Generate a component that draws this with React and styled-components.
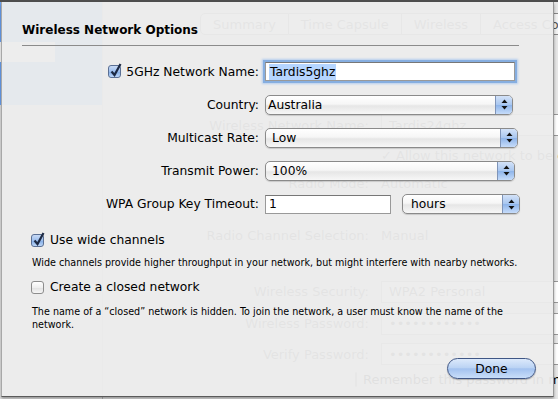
import styled, { createGlobalStyle } from 'styled-components'

const GlobalStyle = createGlobalStyle`
  html, body { margin: 0; padding: 0; background: #e8e8e8; }
  body { font-family: "DejaVu Sans", "Liberation Sans", sans-serif; }
`

const Frame = styled.div`
  position: relative;
  width: 558px;
  height: 399px;
  overflow: hidden;
  background: #e8e8e8;
  font-family: "DejaVu Sans", "Liberation Sans", sans-serif;
  color: #000;
`

/* ---------- the window behind the sheet ---------- */

const Backdrop = styled.div`
  display: flex;
  flex-direction: column;
  height: 100%;
`

const Toolbar = styled.div`
  height: 2px;
  background: #4f4f4f;
`

const Body = styled.div`
  flex: 1;
  display: flex;
  min-height: 0;
`

const Sidebar = styled.div`
  width: 102px;
  flex-shrink: 0;
  display: flex;
  flex-direction: column;
  border-right: 1px solid #bbb;
`

const SidebarSelection = styled.div`
  height: 103px;
  background: #6da6f8;
  display: flex;
  flex-direction: column;
  padding-top: 40px;
  box-sizing: border-box;
`

const SidebarField = styled.div`
  width: 55px;
  height: 20px;
  background: #fff;
`

const Pane = styled.div`
  flex: 1;
  min-width: 0;
  display: flex;
  flex-direction: column;
  padding-top: 11px;
  white-space: nowrap;
`

const Tabs = styled.div`
  display: flex;
  margin-left: 97px;
  height: 22px;
`

const Tab = styled.div`
  padding: 0 12px;
  display: flex;
  align-items: center;
  font-size: 13px;
  color: #555;
  border: 1px solid #888;
  border-left-width: ${p => (p.first ? 1 : 0)}px;
  background: #f4f4f4;
  border-radius: ${p => (p.first ? '5px 0 0 5px' : '0')};
`

const GhostForm = styled.div`
  display: grid;
  grid-template-columns: 266px 1fr;
  column-gap: 12px;
  margin-top: 75px;
  font-size: 13px;
  color: #444;
`

const GhostLabel = styled.div`
  height: ${p => p.h}px;
  display: flex;
  align-items: center;
  justify-content: flex-end;
`

const GhostValue = styled.div`
  height: ${p => p.h}px;
  display: flex;
  align-items: center;
`

const GhostField = styled.div`
  width: 200px;
  height: 20px;
  border: 1px solid #999;
  background: #fff;
  display: flex;
  align-items: center;
  padding-left: 7px;
`

const GhostRemember = styled.div`
  grid-column: 1 / 3;
  height: 22px;
  display: flex;
  align-items: center;
  gap: 6px;
  padding-left: 252px;
  color: #000;
`

const GhostBox = styled.span`
  width: 13px;
  height: 13px;
  border: 1px solid #888;
  border-radius: 3px;
  background: #fff;
`

/* ---------- the sheet ---------- */

const Sheet = styled.div`
  position: absolute;
  left: 1px;
  top: 2px;
  width: 553px;
  height: 395px;
  box-sizing: border-box;
  background: rgba(236, 236, 236, 0.95);
  border-left: 1px solid #a8a8a8;
  border-right: 1px solid #9a9a9a;
  border-bottom: 1px solid #5a5a5a;
  box-shadow: 0 2px 3px rgba(0, 0, 0, 0.35);
  display: flex;
  flex-direction: column;
  padding: 0 18px 0 20px;
  white-space: normal;
`

const Title = styled.div`
  font-weight: bold;
  font-size: 12px;
  padding-top: 21px;
  height: 22px;
`

const Rule = styled.div`
  height: 1px;
  background: #8b8b8b;
  margin: 0 16px 0 0;
`

const Form = styled.div`
  display: grid;
  grid-template-columns: 237px 1fr;
  column-gap: 6px;
  row-gap: 12px;
  margin-top: 15px;
  font-size: 12.3px;
`

const Label = styled.div`
  display: flex;
  align-items: center;
  justify-content: flex-end;
  gap: 5px;
  height: ${p => p.h || 21}px;
`

const Control = styled.div`
  display: flex;
  align-items: center;
  gap: 11px;
  height: ${p => p.h || 21}px;
`

const TextField = styled.div`
  width: ${p => p.w}px;
  height: 19px;
  box-sizing: border-box;
  background: #fff;
  border: 1px solid #999;
  border-top-color: #777;
  display: flex;
  align-items: center;
  padding-left: 3px;
  box-shadow: ${p => (p.focus ? '0 0 0 2px #86aee0, 0 0 2px 3px #b4cdee' : 'none')};
`

const Selected = styled.span`
  background: #b5d5ff;
  padding: 1px 1px;
`

const Popup = styled.div`
  width: ${p => p.w}px;
  height: 20px;
  box-sizing: border-box;
  border: 1px solid #8a8a8a;
  border-radius: 5px;
  background: linear-gradient(#ffffff 0%, #f6f6f6 45%, #e6e6e6 55%, #f7f7f7 100%);
  display: flex;
  align-items: center;
  overflow: hidden;
  box-shadow: 0 1px 1px rgba(0, 0, 0, 0.15);
`

const PopupValue = styled.span`
  flex: 1;
  padding-left: ${p => p.pad || 2}px;
`

const Stepper = styled.span`
  width: 16px;
  height: 100%;
  background: linear-gradient(#d3e2f8 0%, #a9c7f0 48%, #8fb5ea 52%, #c6dcfa 100%);
  border-left: 1px solid #7f94b8;
  display: flex;
  align-items: center;
  justify-content: center;
`

const Box = styled.span`
  width: 13px;
  height: 13px;
  box-sizing: border-box;
  border: 1px solid ${p => (p.checked ? '#5a6f94' : '#8d8d8d')};
  border-radius: 3px;
  background: ${p =>
    p.checked
      ? 'linear-gradient(#c8daf5 0%, #9ebfee 50%, #85aee6 55%, #bcd6f8 100%)'
      : 'linear-gradient(#ffffff 0%, #efefef 50%, #e2e2e2 55%, #f6f6f6 100%)'};
  position: relative;
  flex-shrink: 0;
`

const Check = styled.svg`
  position: absolute;
  left: 0px;
  top: -4px;
`

const Option = styled.label`
  display: flex;
  align-items: center;
  gap: 6px;
  font-size: 12.3px;
  height: 18px;
  margin-left: 9px;
  margin-top: ${p => p.top}px;
`

const Note = styled.p`
  margin: ${p => p.top}px 0 0 10px;
  font-size: 9.6px;
  line-height: 13px;
  width: 500px;
`

const Footer = styled.div`
  display: flex;
  justify-content: flex-end;
  margin-top: auto;
  padding: 0 0 17px;
`

const DoneButton = styled.button`
  width: 89px;
  height: 21px;
  margin-right: -1px;
  border-radius: 11px;
  border: 1px solid #3f5685;
  background: linear-gradient(#dce9fb 0%, #bcd4f4 45%, #a3c2ef 52%, #c9def9 100%);
  font-family: inherit;
  font-size: 12.3px;
  color: #000;
  padding: 0;
  box-shadow: 0 1px 1px rgba(0, 0, 0, 0.25);
`

const Arrows = () => (
  <svg width="7" height="11" viewBox="0 0 7 11">
    <path d="M3.5 0.5 L6.5 4 L0.5 4 Z" fill="#111" />
    <path d="M3.5 10.5 L6.5 7 L0.5 7 Z" fill="#111" />
  </svg>
)

const Checkbox = ({ checked }) => (
  <Box checked={checked}>
    {checked && (
      <Check width="14" height="16" viewBox="0 0 14 16">
        <path d="M2.5 9.5 L5.5 13 L11.5 2" stroke="#1d2a44" strokeWidth="2.2" fill="none" />
      </Check>
    )}
  </Box>
)

const Select = ({ w, value, pad }) => (
  <Popup w={w}>
    <PopupValue pad={pad}>{value}</PopupValue>
    <Stepper>
      <Arrows />
    </Stepper>
  </Popup>
)

const ghostRows = [
  ['Wireless Network Name:', 'Tardis24ghz', 30, true],
  ['', '✓ Allow this network to be extended', 30],
  ['Radio Mode:', 'Automatic', 26],
  ['', '', 26],
  ['Radio Channel Selection:', 'Manual', 27],
  ['', '', 27],
  ['Wireless Security:', 'WPA2 Personal', 31, true],
  ['Wireless Password:', '••••••••••••', 33, true],
  ['Verify Password:', '••••••••••••', 28, true],
]

const App = () => (
  <Frame>
    <GlobalStyle />
    <Backdrop>
      <Toolbar />
      <Body>
        <Sidebar>
          <SidebarSelection>
            <SidebarField />
          </SidebarSelection>
        </Sidebar>
        <Pane>
          <Tabs>
            <Tab first>Summary</Tab>
            <Tab>Time Capsule</Tab>
            <Tab>Wireless</Tab>
            <Tab>Access Control</Tab>
          </Tabs>
          <GhostForm>
            {ghostRows.map(([label, value, h, field], i) => [
              <GhostLabel key={'l' + i} h={h}>{label}</GhostLabel>,
              <GhostValue key={'v' + i} h={h}>
                {field ? <GhostField>{value}</GhostField> : value}
              </GhostValue>,
            ])}
            <GhostRemember>
              <GhostBox />
              Remember this password in my keychain
            </GhostRemember>
          </GhostForm>
        </Pane>
      </Body>
    </Backdrop>

    <Sheet>
      <Title>Wireless Network Options</Title>
      <Rule />
      <Form>
        <Label>
          <Checkbox checked />
          5GHz Network Name:
        </Label>
        <Control>
          <TextField w={250} focus>
            <Selected>Tardis5ghz</Selected>
          </TextField>
        </Control>

        <Label>Country:</Label>
        <Control>
          <Select w={248} value="Australia" />
        </Control>

        <Label>Multicast Rate:</Label>
        <Control>
          <Select w={253} value="Low" pad={6} />
        </Control>

        <Label>Transmit Power:</Label>
        <Control>
          <Select w={250} value="100%" pad={6} />
        </Control>

        <Label h={22}>WPA Group Key Timeout:</Label>
        <Control h={22}>
          <TextField w={126}>1</TextField>
          <Select w={118} value="hours" pad={8} />
        </Control>
      </Form>

      <Option top={16}>
        <Checkbox checked />
        Use wide channels
      </Option>
      <Note top={7}>
        Wide channels provide higher throughput in your network, but might interfere with nearby networks.
      </Note>
      <Option top={9}>
        <Checkbox />
        Create a closed network
      </Option>
      <Note top={9}>
        The name of a “closed” network is hidden. To join the network, a user must know the name of the network.
      </Note>

      <Footer>
        <DoneButton>Done</DoneButton>
      </Footer>
    </Sheet>
  </Frame>
)

export default App
